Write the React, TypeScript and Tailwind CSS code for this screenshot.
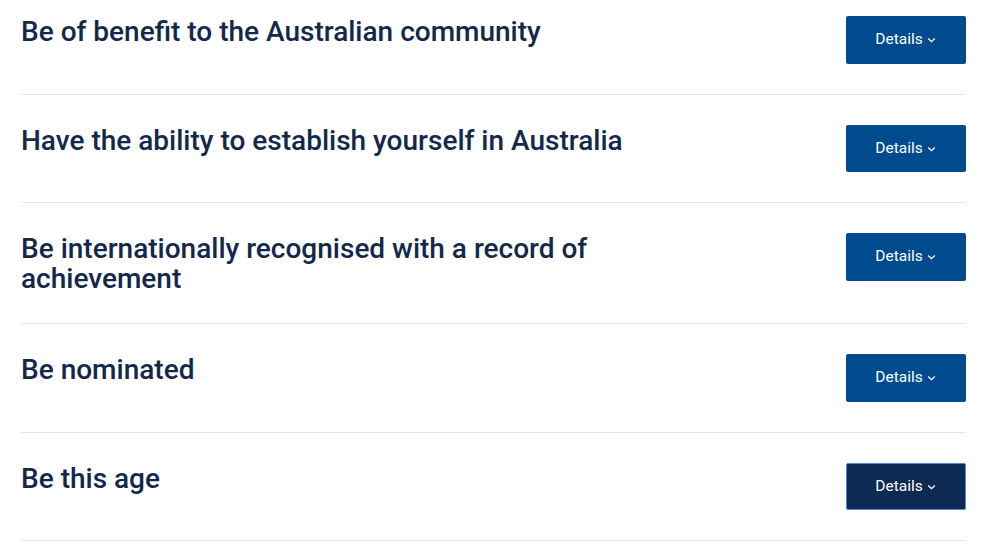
import React from 'react'

const items = [
  'Be of benefit to the Australian community',
  'Have the ability to establish yourself in Australia',
  'Be internationally recognised with a record of achievement',
  'Be nominated',
  'Be this age',
]

function Chevron() {
  return (
    <svg width="9" height="6" viewBox="0 0 9 6" fill="none" className="ml-[4px] mt-[1px]">
      <path d="M1.2 1.5 4.5 4.6 7.8 1.5" stroke="currentColor" strokeWidth="1.3" />
    </svg>
  )
}

export default function App() {
  return (
    <div className="min-h-screen bg-white pt-[16px] pl-[21px] pr-[18px]" style={{ fontFamily: 'Roboto, "Liberation Sans", sans-serif' }}>
      {items.map((t, i) => {
        const active = i === items.length - 1
        return (
          <div key={t} className={`flex items-start justify-between border-b border-[#e6e6e6] pb-[30px] ${i === 0 ? '' : 'pt-[30px]'}`}>
            <h2 className="max-w-[640px] mt-[1px] -mb-[1px] text-[28px] leading-[30px] font-medium text-[#13284b]">{t}</h2>
            <button
              className={`flex items-center justify-center w-[120px] h-[47.5px] rounded-[2px] pr-[1px] text-[15.5px] text-white shrink-0 ${active ? 'bg-[#0c2a52] border border-[#4f86d1]' : 'bg-[#004b8d]'}`}
            >
              Details
              <Chevron />
            </button>
          </div>
        )
      })}
    </div>
  )
}
